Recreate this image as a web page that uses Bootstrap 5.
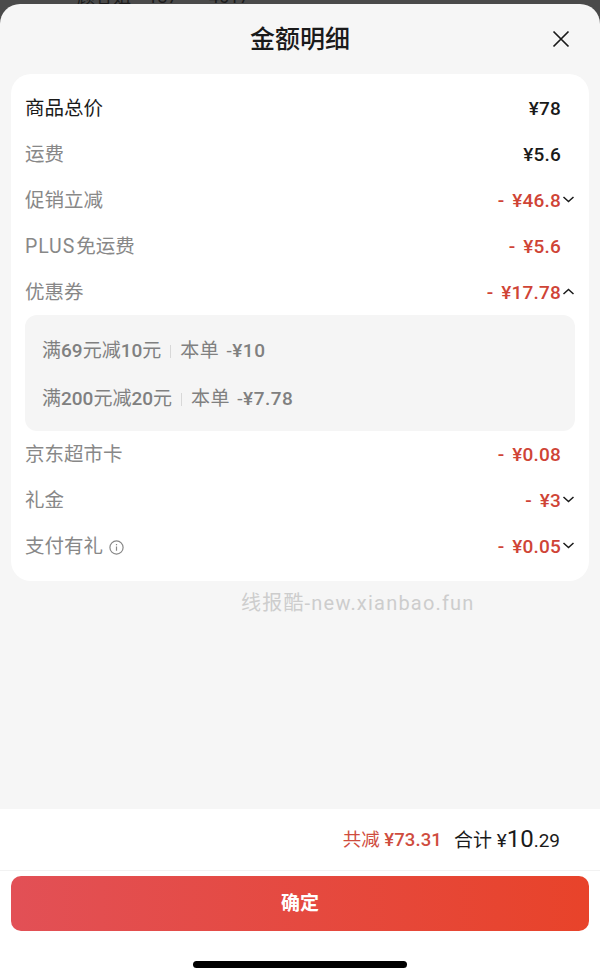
<!DOCTYPE html>
<html lang="zh">
<head>
  <meta charset="UTF-8" />
  <title>金额明细</title>
  <link href="https://cdn.jsdelivr.net/npm/bootstrap@5.3.0/dist/css/bootstrap.min.css" rel="stylesheet" />
  <style>
    html, body { height: 979px; overflow: hidden; }
    body { background: #4a4a4a; font-family: Roboto, "Noto Sans CJK SC", sans-serif; }
    .backdrop-strip { height: 4px; overflow: hidden; padding-left: 77px; color: #1c1c1c; font-size: 18px; line-height: 20px; }
    .backdrop-strip span { display: block; margin-top: -13px; white-space: nowrap; word-spacing: 12px; }
    .sheet { height: 975px; background: #f6f6f6; border-radius: 20px 20px 0 0; }
    .sheet-head { height: 70px; padding-top: 2px; }
    .sheet-title { font-size: 25px; font-weight: 500; color: #1a1a1a; line-height: 68px; }
    .close-x { right: 29px; top: 25px; width: 20px; height: 20px; }
    .amount-card { margin: 0 11px; height: 507px; background: #fff; border-radius: 20px; padding: 11px 14px 0; }
    .fee-row { height: 46px; font-size: 19.5px; color: #888; padding: 2px 14px 0 0; position: relative; }
    .fee-row.first-row { color: #1a1a1a; }
    .fee-val { color: #1a1a1a; font-weight: 500; font-size: 19px; letter-spacing: .2px; word-spacing: 3px; }
    .fee-val.minus { color: #cf4436; }
    .plus-tag { letter-spacing: .9px; margin-right: 1px; }
    .chev { position: absolute; right: 0; top: 50%; margin-top: -5px; width: 13px; height: 9px; }
    .coupon-box { height: 116px; background: #f5f5f5; border-radius: 12px; padding: 12px 17px 0; color: #808080; font-size: 19px; }
    .coupon-line { height: 48px; }
    .coupon-line b { font-weight: 500; }
    .coupon-sep { width: 1px; height: 13px; background: #d8d8d8; margin: 0 9px; }
    .coupon-amt { letter-spacing: .5px; word-spacing: 2px; }
    .tip-icon { width: 15px; height: 15px; margin-left: 6px; }
    .mark-text { height: 228px; padding: 10px 0 0 241px; color: #cdcdcd; font-size: 20px; line-height: 24px; letter-spacing: 1.2px; }
    .foot-bar { background: #fff; height: 170px; }
    .sum-row { height: 62px; padding: 3px 40px 0 0; border-bottom: 1px solid #f2f2f2; font-size: 19px; color: #1a1a1a; }
    .sum-cut { color: #cf4c3e; margin-right: 12px; font-size: 18.5px; }
    .sum-cut b { font-weight: 500; letter-spacing: .1px; }
    .sum-big { font-size: 24px; font-weight: 400; line-height: 1; }
    .sum-small { font-size: 19px; font-weight: 400; }
    .confirm-btn { display: block; width: 578px; height: 55px; margin: 5px 11px 0; border: 0; border-radius: 10px; color: #fff; font-size: 19px; font-weight: 700; padding-top: 8px; background: linear-gradient(90deg, #e25056, #e8432a); }
    .home-bar { width: 214px; height: 7px; border-radius: 4px; background: #000; margin: 30px auto 0; }
  </style>
</head>
<body>
  <div class="backdrop-strip"><span>顾客姐 137****4617</span></div>
  <div class="sheet d-flex flex-column overflow-hidden">
    <div class="sheet-head position-relative text-center">
      <div class="sheet-title">金额明细</div>
      <svg class="close-x position-absolute" viewBox="0 0 20 20" fill="none" stroke="#1a1a1a" stroke-width="1.7"><path d="M2.5 2.5l15 15M17.5 2.5l-15 15"/></svg>
    </div>
    <div class="amount-card">
      <div class="fee-row first-row d-flex justify-content-between align-items-center"><span>商品总价</span><span class="fee-val">¥78</span></div>
      <div class="fee-row d-flex justify-content-between align-items-center"><span>运费</span><span class="fee-val">¥5.6</span></div>
      <div class="fee-row d-flex justify-content-between align-items-center"><span>促销立减</span><span class="fee-val minus">- ¥46.8</span>
        <svg class="chev" viewBox="0 0 13 9" fill="none" stroke="#1a1a1a" stroke-width="1.5"><path d="M1.5 2l5 4.5 5-4.5"/></svg></div>
      <div class="fee-row d-flex justify-content-between align-items-center"><span><span class="plus-tag">PLUS</span>免运费</span><span class="fee-val minus">- ¥5.6</span></div>
      <div class="fee-row d-flex justify-content-between align-items-center"><span>优惠券</span><span class="fee-val minus">- ¥17.78</span>
        <svg class="chev" viewBox="0 0 13 9" fill="none" stroke="#1a1a1a" stroke-width="1.5"><path d="M1.5 7l5-4.5 5 4.5"/></svg></div>
      <div class="coupon-box">
        <div class="coupon-line d-flex align-items-center"><span>满<b>69</b>元减<b>10</b>元</span><i class="coupon-sep"></i><span class="coupon-amt">本单 -<b>¥10</b></span></div>
        <div class="coupon-line d-flex align-items-center"><span>满<b>200</b>元减<b>20</b>元</span><i class="coupon-sep"></i><span class="coupon-amt">本单 -<b>¥7.78</b></span></div>
      </div>
      <div class="fee-row d-flex justify-content-between align-items-center"><span>京东超市卡</span><span class="fee-val minus">- ¥0.08</span></div>
      <div class="fee-row d-flex justify-content-between align-items-center"><span>礼金</span><span class="fee-val minus">- ¥3</span>
        <svg class="chev" viewBox="0 0 13 9" fill="none" stroke="#1a1a1a" stroke-width="1.5"><path d="M1.5 2l5 4.5 5-4.5"/></svg></div>
      <div class="fee-row d-flex justify-content-between align-items-center"><span class="d-flex align-items-center">支付有礼<svg class="tip-icon" viewBox="0 0 15 15" fill="none" stroke="#888" stroke-width="1.2"><circle cx="7.5" cy="7.5" r="6.6"/><path d="M7.5 6.6v4.2M7.5 4.1v1.2"/></svg></span><span class="fee-val minus">- ¥0.05</span>
        <svg class="chev" viewBox="0 0 13 9" fill="none" stroke="#1a1a1a" stroke-width="1.5"><path d="M1.5 2l5 4.5 5-4.5"/></svg></div>
    </div>
    <div class="mark-text">线报酷-new.xianbao.fun</div>
    <div class="foot-bar">
      <div class="sum-row d-flex justify-content-end align-items-center">
        <span class="sum-cut">共减 <b>¥73.31</b></span>
        <span>合计 ¥<span class="sum-big">10</span><span class="sum-small">.29</span></span>
      </div>
      <button type="button" class="btn confirm-btn">确定</button>
      <div class="home-bar"></div>
    </div>
  </div>
  <script src="https://cdn.jsdelivr.net/npm/bootstrap@5.3.0/dist/js/bootstrap.bundle.min.js"></script>
</body>
</html>
